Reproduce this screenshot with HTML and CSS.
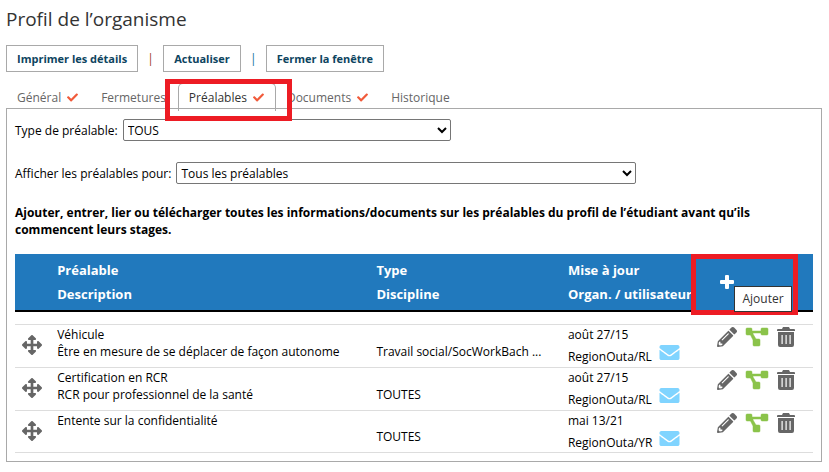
FILE: index.html
```html
<!DOCTYPE html>
<html lang="fr">
<head>
  <meta charset="utf-8">
  <meta name="viewport" content="width=device-width, initial-scale=1">
  <title>Profil de l’organisme</title>
  <link rel="stylesheet" href="styles.css">
</head>
<body>
  <!-- Shared icons -->
  <svg class="sprite" aria-hidden="true">
    <symbol id="check" viewBox="0 0 512 512">
      <path d="M173.9 439.400 7.500 273c-10-10-10-26.200 0-36.200l36.200-36.200c10-10 26.200-10 36.200 0L192 312.700 432.100 72.600c10-10 26.200-10 36.200 0l36.200 36.200c10 10 10 26.200 0 36.200L210.100 439.400c-10 10-26.200 10-36.200 0z"/>
    </symbol>
    <symbol id="move" viewBox="0 0 512 512">
      <path d="M352 426 273 505a24 24 0 0 1-34 0L160 426c-15-15-4-41 17-41h45V290H127v45c0 21-26 32-41 17L7 273a24 24 0 0 1 0-34l79-79c15-15 41-4 41 17v45h95V127h-45c-21 0-32-26-17-41L239 7a24 24 0 0 1 34 0l79 79c15 15 4 41-17 41h-45v95h95v-45c0-21 26-32 41-17l79 79a24 24 0 0 1 0 34l-79 79c-15 15-41 4-41-17v-45H290v95h45c21 0 32 26 17 41z"/>
    </symbol>
    <symbol id="mail" viewBox="0 0 512 384">
      <path d="M502 127c4-3 10 0 10 5v204c0 26-22 48-48 48H48c-26 0-48-22-48-48V132c0-5 6-8 10-5 22 17 52 39 154 114 21 15 57 48 92 48s72-33 92-48c102-75 132-97 154-114zM256 256c23 0 57-29 73-42 133-96 143-104 174-128 6-5 9-12 9-19V48c0-26-22-48-48-48H48C22 0 0 22 0 48v19c0 7 3 14 9 19 31 24 41 32 174 128 16 13 50 42 73 42z"/>
    </symbol>
    <symbol id="pencil" viewBox="0 0 512 512">
      <path d="M498 142l-46 46c-5 5-13 5-17 0L324 77c-5-5-5-12 0-17l46-46c19-19 49-19 68 0l60 60c19 19 19 49 0 68zm-214-42L22 362 0 484c-3 16 12 30 28 28l122-22 262-262c5-5 5-13 0-17L301 100c-4-5-12-5-17 0zM124 340c-5-6-5-14 0-20l154-154c6-5 14-5 20 0s5 14 0 20L144 340c-6 5-14 5-20 0zm-36 84h48v36l-64 12-32-32 12-64h36v48z"/>
    </symbol>
    <symbol id="diagram" viewBox="0 0 24 20">
      <path d="M2 1h4q1 0 1 1v2h9V2q0-1 1-1h5q1 0 1 1v5q0 1-1 1h-5q-1 0-1-1V6H8v1l3 5h3q1 0 1 1v5q0 1-1 1H9q-1 0-1-1v-5L5.500 8H2Q1 8 1 7V2q0-1 1-1z" stroke="currentColor" stroke-width=".5"/>
    </symbol>
    <symbol id="trash" viewBox="0 0 18 20">
      <path fill-rule="evenodd" d="M6 0h6l1 2h4q1 0 1 1v1H0V3q0-1 1-1h4zM1 5h16v13q0 2-2 2H3q-2 0-2-2zm3.500 3v9h1.200V8zm4 0v9h1.200V8zm4 0v9h1.200V8z"/>
    </symbol>
    <symbol id="plus" viewBox="0 0 16 16">
      <path d="M7 1h2q1 0 1 1v4h4q1 0 1 1v2q0 1-1 1h-4v4q0 1-1 1H7q-1 0-1-1v-4H2q-1 0-1-1V7q0-1 1-1h4V2q0-1 1-1z"/>
    </symbol>
  </svg>

  <h1>Profil de l’organisme</h1>

  <div class="actions">
    <button type="button">Imprimer les détails</button>
    <span class="sep sep-brown">|</span>
    <button type="button">Actualiser</button>
    <span class="sep sep-blue">|</span>
    <button type="button">Fermer la fenêtre</button>
  </div>

  <nav class="tabs">
    <a class="tab" href="#general">Général <svg class="check"><use href="#check"/></svg></a>
    <a class="tab" href="#fermetures">Fermetures</a>
    <a class="tab active" href="#prealables">Préalables <svg class="check"><use href="#check"/></svg><span class="highlight highlight-tab"></span></a>
    <a class="tab" href="#documents">Documents <svg class="check"><use href="#check"/></svg></a>
    <a class="tab" href="#historique">Historique</a>
  </nav>

  <main class="panel" id="prealables">
    <div class="field">
      <label for="type">Type de préalable:</label>
      <select id="type" class="select-type">
        <option>TOUS</option>
      </select>
    </div>
    <div class="field">
      <label for="filter">Afficher les préalables pour:</label>
      <select id="filter" class="select-filter">
        <option>Tous les préalables</option>
      </select>
    </div>

    <p class="intro">Ajouter, entrer, lier ou télécharger toutes les informations/documents sur les préalables du profil de l’étudiant avant qu’ils commencent leurs stages.</p>

    <table>
      <colgroup>
        <col class="col-move">
        <col class="col-name">
        <col class="col-type">
        <col class="col-update">
        <col class="col-tools">
      </colgroup>
      <thead>
        <tr>
          <th></th>
          <th>Préalable<br>Description</th>
          <th>Type<br>Discipline</th>
          <th>Mise à jour<br>Organ. / utilisateur</th>
          <th class="add-cell">
            <button type="button" class="add" aria-label="Ajouter"><svg><use href="#plus"/></svg></button>
            <span class="highlight highlight-add"></span>
            <span class="tooltip">Ajouter</span>
          </th>
        </tr>
      </thead>
      <tbody>
        <tr class="spacer"><td colspan="5"></td></tr>
        <tr>
          <td class="move"><svg><use href="#move"/></svg></td>
          <td>Véhicule<br>Être en mesure de se déplacer de façon autonome</td>
          <td class="type">Travail social/SocWorkBach ...</td>
          <td>août 27/15<div class="user">RegionOuta/RL <a href="#mail" aria-label="Courriel"><svg><use href="#mail"/></svg></a></div></td>
          <td>
            <div class="tools">
              <button type="button" aria-label="Modifier"><svg class="pencil"><use href="#pencil"/></svg></button>
              <button type="button" aria-label="Lier"><svg class="diagram"><use href="#diagram"/></svg></button>
              <button type="button" aria-label="Supprimer"><svg class="trash"><use href="#trash"/></svg></button>
            </div>
          </td>
        </tr>
        <tr>
          <td class="move"><svg><use href="#move"/></svg></td>
          <td>Certification en RCR<br>RCR pour professionnel de la santé</td>
          <td class="type">TOUTES</td>
          <td>août 27/15<div class="user">RegionOuta/RL <a href="#mail" aria-label="Courriel"><svg><use href="#mail"/></svg></a></div></td>
          <td>
            <div class="tools">
              <button type="button" aria-label="Modifier"><svg class="pencil"><use href="#pencil"/></svg></button>
              <button type="button" aria-label="Lier"><svg class="diagram"><use href="#diagram"/></svg></button>
              <button type="button" aria-label="Supprimer"><svg class="trash"><use href="#trash"/></svg></button>
            </div>
          </td>
        </tr>
        <tr>
          <td class="move"><svg><use href="#move"/></svg></td>
          <td>Entente sur la confidentialité</td>
          <td class="type">TOUTES</td>
          <td>mai 13/21<div class="user">RegionOuta/YR <a href="#mail" aria-label="Courriel"><svg><use href="#mail"/></svg></a></div></td>
          <td>
            <div class="tools">
              <button type="button" aria-label="Modifier"><svg class="pencil"><use href="#pencil"/></svg></button>
              <button type="button" aria-label="Lier"><svg class="diagram"><use href="#diagram"/></svg></button>
              <button type="button" aria-label="Supprimer"><svg class="trash"><use href="#trash"/></svg></button>
            </div>
          </td>
        </tr>
      </tbody>
    </table>
  </main>
</body>
</html>
```

FILE: styles.css
```css
* {
  box-sizing: border-box;
}

body {
  margin: 0;
  padding: 6px 7px 10px 6px;
  background: #fff;
  color: #000;
  font-family: 'Open Sans', 'Noto Sans', sans-serif;
  font-size: 12px;
  line-height: 17px;
}

svg {
  display: block;
  fill: currentColor;
}

.sprite {
  display: none;
}

h1 {
  margin: 0 0 13px;
  color: #333;
  font-size: 19px;
  font-weight: 400;
  line-height: 26px;
}

button {
  padding: 0;
  border: none;
  background: none;
  color: inherit;
  font: inherit;
  cursor: pointer;
}

/* Top buttons */
.actions {
  display: flex;
  align-items: center;
}

.actions button {
  height: 27px;
  padding: 0 10px;
  border: 1px solid #a9a9a9;
  background: #fff;
  color: #0d4460;
  font-size: 11px;
  font-weight: 700;
}

.sep {
  width: 25px;
  text-align: center;
}

.sep-brown {
  color: #a0401c;
}

.sep-blue {
  color: #0b6f9c;
}

/* Tabs */
.tabs {
  display: flex;
  margin-top: 11px;
}

.tab {
  display: flex;
  align-items: center;
  gap: 6px;
  height: 28px;
  margin-bottom: -3px;
  padding: 0 11px 1px 10px;
  border: 1px solid transparent;
  border-bottom: none;
  color: #666;
  text-decoration: none;
}

.tab.active {
  position: relative;
  border-color: #a9a9a9;
  border-radius: 5px 5px 0 0;
  color: #333;
}

.check {
  width: 11px;
  height: 11px;
  color: #f15a3a;
}

/* Red callout frames */
.highlight {
  position: absolute;
  border: 5px solid #ed1c24;
  pointer-events: none;
}

.highlight-tab {
  top: -5px;
  right: -17px;
  bottom: -10px;
  left: -14px;
}

.highlight-add {
  top: 0;
  right: 15px;
  bottom: -5px;
  left: -6px;
}

/* Content */
.panel {
  padding: 10px 8px 8px;
  border: 1px solid #a9a9a9;
}

.field {
  display: flex;
  align-items: center;
  gap: 5px;
  margin-bottom: 21px;
}

select {
  height: 22px;
  min-width: 0;
  max-width: 100%;
  border: 1px solid #767676;
  border-radius: 2px;
  background-color: #fff;
  color: #000;
  font: inherit;
}

.select-type {
  width: 328px;
}

.select-filter {
  width: 460px;
}

.intro {
  margin: -1px 0 16px;
  font-weight: 700;
}

table {
  width: 100%;
  table-layout: fixed;
  border-spacing: 0;
}

.col-move {
  width: 42px;
}

.col-name {
  width: 40%;
}

.col-type {
  width: 24%;
}

.col-update {
  width: 129px;
}

.col-tools {
  width: 115px;
}

th {
  height: 58px;
  padding: 4px 0;
  border-bottom: 2px solid #000;
  background: #2179bd;
  color: #fff;
  font-size: 13px;
  line-height: 24px;
  text-align: left;
  white-space: nowrap;
}

td {
  height: 43px;
  padding: 1px 0 0;
  border-bottom: 1px solid #ddd;
  vertical-align: top;
}

tr:last-child td {
  height: 42px;
}

.spacer td {
  height: 13px;
  padding: 0;
}

.move {
  padding: 10px 7px 0;
  color: #666;
}

.move svg {
  width: 20px;
  height: 20px;
}

.type {
  padding-bottom: 7px;
  vertical-align: bottom;
}

.user {
  display: flex;
  gap: 7px;
  padding-top: 5px;
  white-space: nowrap;
}

.user a {
  margin-top: -3px;
  color: #80d4ff;
}

.user svg {
  width: 21px;
  height: 15px;
}

.tools {
  display: flex;
  gap: 8px;
  padding: 1px 0 0 20px;
  color: #666;
}

.pencil {
  width: 20px;
  height: 20px;
}

.diagram {
  width: 24px;
  height: 20px;
  color: #8bc34a;
}

.trash {
  width: 18px;
  height: 20px;
}

.add-cell {
  position: relative;
}

.add {
  display: block;
  margin-left: 22px;
}

.add svg {
  width: 16px;
  height: 16px;
}

.tooltip {
  position: absolute;
  top: 32px;
  left: 37px;
  padding: 3px 7px;
  border: 1px solid #333;
  background: #fff;
  color: #333;
  font-size: 12px;
  font-weight: 400;
  line-height: 18px;
}
```
